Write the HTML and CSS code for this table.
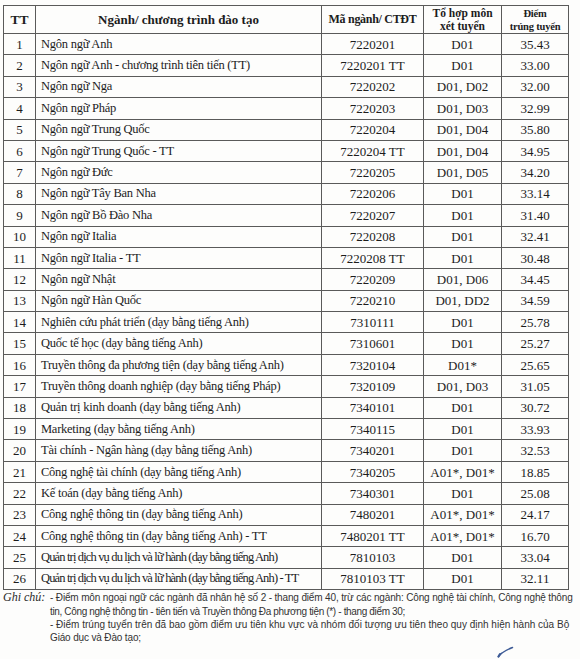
FILE: index.html
```html
<!DOCTYPE html>
<html lang="vi">
<head>
<meta charset="utf-8">
<title>Điểm trúng tuyển</title>
<link rel="stylesheet" href="styles.css">
</head>
<body>
<div class="page">
  <table class="scores">
    <colgroup>
      <col class="c-tt"><col class="c-name"><col class="c-code"><col class="c-combo"><col class="c-score">
    </colgroup>
    <thead>
      <tr>
        <th class="h-tt">TT</th>
        <th class="h-name">Ngành/ chương trình đào tạo</th>
        <th class="h-code">Mã ngành/ CTĐT</th>
        <th class="h-two">Tổ hợp môn<br>xét tuyển</th>
        <th class="h-two h-small">Điểm<br>trúng tuyển</th>
      </tr>
    </thead>
    <tbody>
      <tr><td>1</td><td class="name">Ngôn ngữ Anh</td><td>7220201</td><td>D01</td><td>35.43</td></tr>
      <tr><td>2</td><td class="name">Ngôn ngữ Anh - chương trình tiên tiến (TT)</td><td>7220201 TT</td><td>D01</td><td>33.00</td></tr>
      <tr><td>3</td><td class="name">Ngôn ngữ Nga</td><td>7220202</td><td>D01, D02</td><td>32.00</td></tr>
      <tr><td>4</td><td class="name">Ngôn ngữ Pháp</td><td>7220203</td><td>D01, D03</td><td>32.99</td></tr>
      <tr><td>5</td><td class="name">Ngôn ngữ Trung Quốc</td><td>7220204</td><td>D01, D04</td><td>35.80</td></tr>
      <tr><td>6</td><td class="name">Ngôn ngữ Trung Quốc - TT</td><td>7220204 TT</td><td>D01, D04</td><td>34.95</td></tr>
      <tr><td>7</td><td class="name">Ngôn ngữ Đức</td><td>7220205</td><td>D01, D05</td><td>34.20</td></tr>
      <tr><td>8</td><td class="name">Ngôn ngữ Tây Ban Nha</td><td>7220206</td><td>D01</td><td>33.14</td></tr>
      <tr><td>9</td><td class="name">Ngôn ngữ Bồ Đào Nha</td><td>7220207</td><td>D01</td><td>31.40</td></tr>
      <tr><td>10</td><td class="name">Ngôn ngữ Italia</td><td>7220208</td><td>D01</td><td>32.41</td></tr>
      <tr><td>11</td><td class="name">Ngôn ngữ Italia - TT</td><td>7220208 TT</td><td>D01</td><td>30.48</td></tr>
      <tr><td>12</td><td class="name">Ngôn ngữ Nhật</td><td>7220209</td><td>D01, D06</td><td>34.45</td></tr>
      <tr><td>13</td><td class="name">Ngôn ngữ Hàn Quốc</td><td>7220210</td><td>D01, DD2</td><td>34.59</td></tr>
      <tr><td>14</td><td class="name">Nghiên cứu phát triển (dạy bằng tiếng Anh)</td><td>7310111</td><td>D01</td><td>25.78</td></tr>
      <tr><td>15</td><td class="name">Quốc tế học (dạy bằng tiếng Anh)</td><td>7310601</td><td>D01</td><td>25.27</td></tr>
      <tr><td>16</td><td class="name">Truyền thông đa phương tiện (dạy bằng tiếng Anh)</td><td>7320104</td><td>D01*</td><td>25.65</td></tr>
      <tr><td>17</td><td class="name">Truyền thông doanh nghiệp (dạy bằng tiếng Pháp)</td><td>7320109</td><td>D01, D03</td><td>31.05</td></tr>
      <tr><td>18</td><td class="name">Quản trị kinh doanh (dạy bằng tiếng Anh)</td><td>7340101</td><td>D01</td><td>30.72</td></tr>
      <tr><td>19</td><td class="name">Marketing (dạy bằng tiếng Anh)</td><td>7340115</td><td>D01</td><td>33.93</td></tr>
      <tr><td>20</td><td class="name">Tài chính - Ngân hàng (dạy bằng tiếng Anh)</td><td>7340201</td><td>D01</td><td>32.53</td></tr>
      <tr><td>21</td><td class="name">Công nghệ tài chính (dạy bằng tiếng Anh)</td><td>7340205</td><td>A01*, D01*</td><td>18.85</td></tr>
      <tr><td>22</td><td class="name">Kế toán (dạy bằng tiếng Anh)</td><td>7340301</td><td>D01</td><td>25.08</td></tr>
      <tr><td>23</td><td class="name">Công nghệ thông tin (dạy bằng tiếng Anh)</td><td>7480201</td><td>A01*, D01*</td><td>24.17</td></tr>
      <tr><td>24</td><td class="name">Công nghệ thông tin (dạy bằng tiếng Anh) - TT</td><td>7480201 TT</td><td>A01*, D01*</td><td>16.70</td></tr>
      <tr><td>25</td><td class="name cond">Quản trị dịch vụ du lịch và lữ hành (dạy bằng tiếng Anh)</td><td>7810103</td><td>D01</td><td>33.04</td></tr>
      <tr><td>26</td><td class="name cond">Quản trị dịch vụ du lịch và lữ hành (dạy bằng tiếng Anh) - TT</td><td>7810103 TT</td><td>D01</td><td>32.11</td></tr>
    </tbody>
  </table>

  <div class="notes">
    <div class="notes-label">Ghi chú:</div>
    <div class="notes-body">
      <div class="line">- Điểm môn ngoại ngữ các ngành đã nhân hệ số 2 - thang điểm 40, trừ các ngành: Công nghệ tài chính, Công nghệ thông</div>
      <div class="line line-tight">tin, Công nghệ thông tin - tiên tiến và Truyền thông Đa phương tiện (*) - thang điểm 30;</div>
      <div class="line line-wide">- Điểm trúng tuyển trên đã bao gồm điểm ưu tiên khu vực và nhóm đối tượng ưu tiên theo quy định hiện hành của Bộ</div>
      <div class="line">Giáo dục và Đào tạo;</div>
    </div>
  </div>

  <svg class="tick" width="17" height="12" viewBox="0 0 17 12" aria-hidden="true">
    <path d="M1.5 10.5 C2.5 9, 4 7.5, 5 7 C8 5, 11 3, 15.5 1.5" fill="none" stroke="#3d5b96" stroke-width="1.5" stroke-linecap="round"/>
    <path d="M1.5 10.5 L3 8.2" fill="none" stroke="#3d5b96" stroke-width="2.2" stroke-linecap="round"/>
  </svg>
</div>
</body>
</html>
```

FILE: styles.css
```css
html, body {
  margin: 0;
  padding: 0;
  background: #fdfdfc;
}

.page {
  position: relative;
  width: 580px;
  height: 659px;
  padding: 5px 0 0 3px;
  box-sizing: border-box;
  display: flex;
  flex-direction: column;
  color: #1c1c1c;
  overflow: hidden;
}

.scores {
  border-collapse: collapse;
  table-layout: fixed;
  width: 565px;
  font-family: "Liberation Serif", "Times New Roman", serif;
  font-size: 13px;
}

.c-tt { width: 32px; }
.c-name { width: 286px; }
.c-code { width: 102px; }
.c-combo { width: 78px; }
.c-score { width: 67px; }

.scores th,
.scores td {
  border: 1px solid #5a5a5a;
  padding: 0;
  text-align: center;
  vertical-align: middle;
  white-space: nowrap;
  overflow: hidden;
}

.scores thead tr {
  height: 28px;
}

.scores th {
  font-weight: bold;
  font-size: 11.5px;
  line-height: 13px;
}

.scores th.h-tt {
  font-size: 13.5px;
}

.scores th.h-name {
  font-size: 13px;
}

.scores th.h-code {
  font-size: 12px;
  letter-spacing: -0.3px;
}

.scores th.h-small {
  font-size: 10.5px;
  letter-spacing: -0.2px;
}

.scores tbody tr {
  height: 21.4px;
}

.scores td {
  line-height: 15px;
}

.scores td.name {
  text-align: left;
  padding-left: 5px;
  font-size: 12.5px;
  letter-spacing: -0.25px;
}

.scores td.cond {
  letter-spacing: -0.85px;
}

.notes {
  display: flex;
  flex: none;
  margin-top: 1px;
  font-family: "Liberation Sans", Arial, sans-serif;
  font-size: 10px;
  line-height: 13.4px;
  letter-spacing: -0.15px;
  color: #333;
}

.notes-label {
  width: 47px;
  flex: none;
  font-family: "Liberation Serif", "Times New Roman", serif;
  font-style: italic;
  font-size: 12px;
  letter-spacing: 0;
  color: #2a2a2a;
}

.notes-body .line {
  white-space: nowrap;
}

.notes-body .line-tight {
  letter-spacing: -0.35px;
}

.notes-body .line-wide {
  letter-spacing: 0;
}

/* hand-drawn signature tick overlaid near the bottom of the notes */
.tick {
  position: absolute;
  left: 497px;
  top: 646px;
  display: block;
}
```
